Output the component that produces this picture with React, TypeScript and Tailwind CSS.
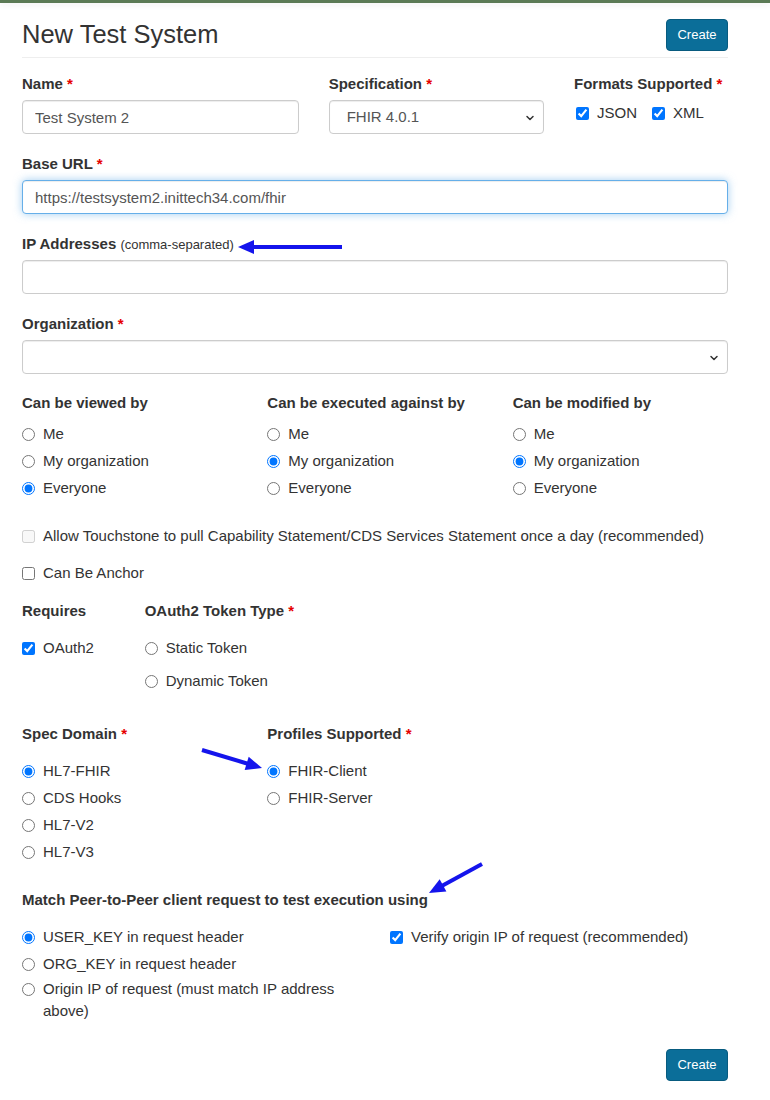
import { ChevronDown } from "lucide-react";

type Pt = [number, number];

const ARROWS: { from: Pt; to: Pt }[] = [
  { from: [342, 247], to: [238, 247] },
  { from: [202, 750], to: [262, 768] },
  { from: [482, 864], to: [429, 893] },
];

function Arrow({ from, to }: { from: Pt; to: Pt }) {
  const dx = to[0] - from[0];
  const dy = to[1] - from[1];
  const len = Math.hypot(dx, dy);
  const ux = dx / len;
  const uy = dy / len;
  const headLen = 16;
  const half = 7;
  const bx = to[0] - ux * headLen;
  const by = to[1] - uy * headLen;
  const pts = [
    `${to[0]},${to[1]}`,
    `${bx - uy * half},${by + ux * half}`,
    `${bx + uy * half},${by - ux * half}`,
  ].join(" ");
  return (
    <g>
      <line x1={from[0]} y1={from[1]} x2={bx + ux * 2} y2={by + uy * 2} stroke="#1414ec" strokeWidth={4} />
      <polygon points={pts} fill="#1414ec" />
    </g>
  );
}

function Label({ children, req }: { children: React.ReactNode; req?: boolean }) {
  return (
    <div className="h-5 text-[15px] leading-5 font-bold text-[#333]">
      {children}
      {req ? <span className="text-[#e60000]"> *</span> : null}
    </div>
  );
}

function Radio({ name, label, checked }: { name: string; label: string; checked?: boolean }) {
  return (
    <label className="flex h-[27px] items-center gap-2 text-[15px] text-[#333]">
      <input type="radio" name={name} defaultChecked={checked} className="m-0 h-[13px] w-[13px] shrink-0" />
      {label}
    </label>
  );
}

function Check({ label, checked, disabled }: { label: string; checked?: boolean; disabled?: boolean }) {
  return (
    <label className="flex h-[27px] items-center gap-2 text-[15px] text-[#333]">
      <input type="checkbox" defaultChecked={checked} disabled={disabled} className="m-0 h-[13px] w-[13px] shrink-0" />
      {label}
    </label>
  );
}

const baseCls = "block h-[34px] w-full rounded-[4px] border bg-white px-3 text-[15px] text-[#555] outline-none";
const inputCls = baseCls + " border-[#ccc] shadow-[inset_0_1px_1px_rgba(0,0,0,0.075)]";
const focusCls =
  baseCls + " border-[#66afe9] shadow-[inset_0_1px_1px_rgba(0,0,0,0.075),0_0_8px_rgba(102,175,233,0.6)]";

function CreateButton() {
  return (
    <button className="h-[32px] w-[62px] rounded-[4px] border border-[#085b7f] bg-[#0b6e99] text-[13px] text-white">
      Create
    </button>
  );
}

function Select({ value }: { value: string }) {
  return (
    <div className="relative">
      <select className={inputCls + " appearance-none pl-[17px]"} defaultValue={value}>
        <option value={value}>{value}</option>
      </select>
      <ChevronDown size={12} strokeWidth={3} className="pointer-events-none absolute right-[8px] top-[12px] text-[#333]" />
    </div>
  );
}

export default function App() {
  return (
    <div className="relative min-h-[1100px] w-[770px] bg-white font-['Liberation_Sans',Arial,sans-serif] text-[#333]">
      <div className="h-[3px] bg-[#5b7a55] shadow-[0_2px_6px_rgba(0,0,0,0.08)]" />

      <div className="ml-[22px] w-[706px]">
        <div className="mt-[16px] flex items-center justify-between border-b border-[#eee] pb-[6px]">
          <h2 className="-mt-[2px] text-[25.5px] leading-[32px] font-normal text-[#333]">New Test System</h2>
          <CreateButton />
        </div>

        <div className="mt-[16px] grid grid-cols-12 gap-x-[30px]">
          <div className="col-span-5">
            <Label req>Name</Label>
            <input className={inputCls + " mt-[6px]"} defaultValue="Test System 2" />
          </div>
          <div className="col-span-4">
            <Label req>Specification</Label>
            <div className="mt-[6px]">
              <Select value="FHIR 4.0.1" />
            </div>
          </div>
          <div className="col-span-3">
            <Label req>Formats Supported</Label>
            <div className="mt-[9px] flex h-5 items-center gap-[15px] pl-[2px] text-[15px]">
              <label className="flex items-center gap-2">
                <input type="checkbox" defaultChecked className="m-0 h-[13px] w-[13px]" />
                JSON
              </label>
              <label className="flex items-center gap-2">
                <input type="checkbox" defaultChecked className="m-0 h-[13px] w-[13px]" />
                XML
              </label>
            </div>
          </div>
        </div>

        <div className="mt-[20px]">
          <Label req>Base URL</Label>
          <input className={focusCls + " mt-[6px]"} defaultValue="https://testsystem2.inittech34.com/fhir" />
        </div>

        <div className="mt-[20px]">
          <Label>
            IP Addresses <span className="text-[13px] font-normal">(comma-separated)</span>
          </Label>
          <input className={inputCls + " mt-[6px]"} />
        </div>

        <div className="mt-[20px]">
          <Label req>Organization</Label>
          <div className="mt-[6px]">
            <Select value="" />
          </div>
        </div>

        <div className="mt-[19px] grid grid-cols-12 gap-x-[30px]">
          <div className="col-span-4">
            <Label>Can be viewed by</Label>
            <div className="mt-[8px]">
              <Radio name="view" label="Me" />
              <Radio name="view" label="My organization" />
              <Radio name="view" label="Everyone" checked />
            </div>
          </div>
          <div className="col-span-4">
            <Label>Can be executed against by</Label>
            <div className="mt-[8px]">
              <Radio name="exec" label="Me" />
              <Radio name="exec" label="My organization" checked />
              <Radio name="exec" label="Everyone" />
            </div>
          </div>
          <div className="col-span-4">
            <Label>Can be modified by</Label>
            <div className="mt-[8px]">
              <Radio name="mod" label="Me" />
              <Radio name="mod" label="My organization" checked />
              <Radio name="mod" label="Everyone" />
            </div>
          </div>
        </div>

        <div className="mt-[21px]">
          <Check
            label="Allow Touchstone to pull Capability Statement/CDS Services Statement once a day (recommended)"
            disabled
          />
        </div>
        <div className="mt-[10px]">
          <Check label="Can Be Anchor" />
        </div>

        <div className="mt-[14px] grid grid-cols-12 gap-x-[30px]">
          <div className="col-span-2">
            <Label>Requires</Label>
            <div className="mt-[14px]">
              <Check label="OAuth2" checked />
            </div>
          </div>
          <div className="col-span-6">
            <Label req>OAuth2 Token Type</Label>
            <div className="mt-[14px] flex flex-col gap-[6px]">
              <Radio name="token" label="Static Token" />
              <Radio name="token" label="Dynamic Token" />
            </div>
          </div>
        </div>

        <div className="mt-[29px] grid grid-cols-12 gap-x-[30px]">
          <div className="col-span-4">
            <Label req>Spec Domain</Label>
            <div className="mt-[14px]">
              <Radio name="domain" label="HL7-FHIR" checked />
              <Radio name="domain" label="CDS Hooks" />
              <Radio name="domain" label="HL7-V2" />
              <Radio name="domain" label="HL7-V3" />
            </div>
          </div>
          <div className="col-span-4">
            <Label req>Profiles Supported</Label>
            <div className="mt-[14px]">
              <Radio name="profile" label="FHIR-Client" checked />
              <Radio name="profile" label="FHIR-Server" />
            </div>
          </div>
        </div>

        <div className="mt-[24px]">
          <Label>Match Peer-to-Peer client request to test execution using</Label>
        </div>
        <div className="mt-[14px] grid grid-cols-12 gap-x-[30px]">
          <div className="col-span-6">
            <Radio name="match" label="USER_KEY in request header" checked />
            <Radio name="match" label="ORG_KEY in request header" />
            <label className="flex items-start gap-2 text-[15px] leading-[22px] text-[#333]">
              <input type="radio" name="match" className="m-0 mt-[5px] h-[13px] w-[13px] shrink-0" />
              Origin IP of request (must match IP address above)
            </label>
          </div>
          <div className="col-span-6">
            <Check label="Verify origin IP of request (recommended)" checked />
          </div>
        </div>

        <div className="mt-[27px] flex justify-end pb-[19px]">
          <CreateButton />
        </div>
      </div>

      <svg className="pointer-events-none absolute top-0 left-0" width={770} height={1100}>
        {ARROWS.map((a, i) => (
          <Arrow key={i} from={a.from} to={a.to} />
        ))}
      </svg>
    </div>
  );
}
